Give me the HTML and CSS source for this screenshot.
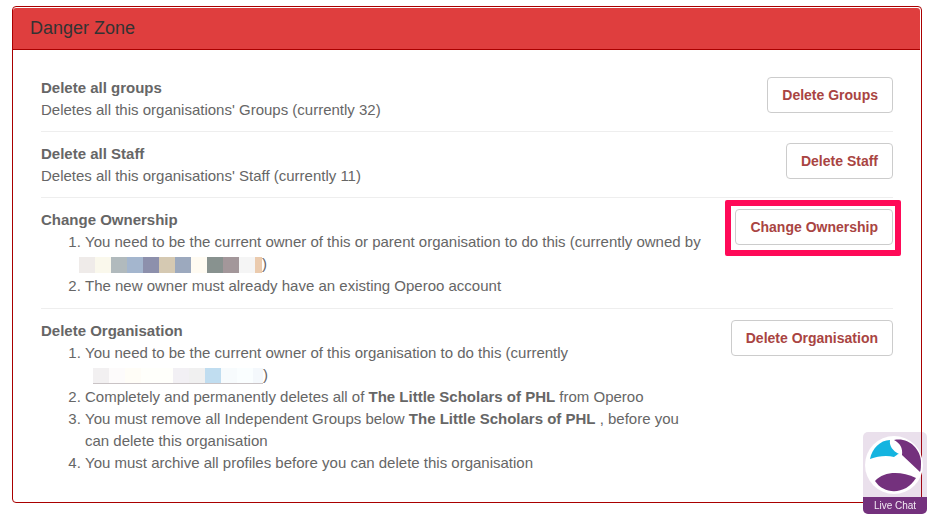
FILE: index.html
```html
<!DOCTYPE html>
<html lang="en">
<head>
    <meta charset="UTF-8">
    <meta name="viewport" content="width=device-width, initial-scale=1.0">
    <title>Danger Zone</title>
    <link rel="stylesheet" href="styles.css">
</head>
<body>
    <section class="panel">
        <h1 class="panel-heading">Danger Zone</h1>
        <div class="panel-body">
            <div class="setting">
                <div class="setting-text">
                    <h2>Delete all groups</h2>
                    <p>Deletes all this organisations' Groups (currently 32)</p>
                </div>
                <button type="button" class="btn">Delete Groups</button>
            </div>
            <div class="setting">
                <div class="setting-text">
                    <h2>Delete all Staff</h2>
                    <p>Deletes all this organisations' Staff (currently 11)</p>
                </div>
                <button type="button" class="btn">Delete Staff</button>
            </div>
            <div class="setting">
                <div class="setting-text">
                    <h2>Change Ownership</h2>
                    <ol>
                        <li>You need to be the current owner of this or parent organisation to do this (currently owned by <span class="owner"><span class="masked masked-owner"></span>)</span></li>
                        <li>The new owner must already have an existing Operoo account</li>
                    </ol>
                </div>
                <button type="button" class="btn highlighted">Change Ownership</button>
            </div>
            <div class="setting">
                <div class="setting-text">
                    <h2>Delete Organisation</h2>
                    <ol>
                        <li>You need to be the current owner of this organisation to do this (currently <span class="owner"><span class="masked masked-parent"></span>)</span></li>
                        <li>Completely and permanently deletes all of <b>The Little Scholars of PHL</b> from Operoo</li>
                        <li>You must remove all Independent Groups below <b>The Little Scholars of PHL</b> , before you can delete this organisation</li>
                        <li>You must archive all profiles before you can delete this organisation</li>
                    </ol>
                </div>
                <button type="button" class="btn">Delete Organisation</button>
            </div>
        </div>
    </section>

    <button type="button" class="live-chat">
        <svg viewBox="0 0 64 65" aria-hidden="true">
            <circle cx="31" cy="33" r="29" fill="#fff"/>
            <path d="M7 27C9 17 17 8 27 8C26 14 30 19 36 22C34 22 33 24 31 25C24 23 15 24 7 27Z" fill="#14b4e0"/>
            <path d="M31 8C45 5 57 16 58 29C58 34 58 38 57 40L39 23C40 16 37 11 31 8Z" fill="#74317d"/>
            <path d="M12 49C21 39 38 39 53 46C43 63 21 63 12 49Z" fill="#74317d"/>
        </svg>
        <span>Live Chat</span>
    </button>
</body>
</html>
```

FILE: styles.css
```css
* {
    box-sizing: border-box;
}
body {
    margin: 6px 8px 15px 12px;
    background: #fff;
    color: #666;
    font-family: "Liberation Sans", Arial, sans-serif;
    font-size: 15px;
    line-height: 22px;
}
.panel {
    border: 1px solid #a90000;
    border-radius: 4px;
    padding: 1px 1px 0 0;
}
.panel-heading {
    margin: 0;
    padding: 9px 17px 10px;
    background: #df3e3e;
    border-bottom: 1px solid #a90000;
    border-radius: 3px 3px 0 0;
    color: #333;
    font-size: 18px;
    font-weight: normal;
    line-height: 22px;
}
.panel-body {
    padding: 16px 27px 17px 28px;
}
.setting {
    display: flex;
    justify-content: space-between;
    align-items: flex-start;
    gap: 8px;
    padding: 11px 0 10px;
    border-bottom: 1px solid #eee;
}
.setting:last-child {
    border-bottom: none;
}
.setting-text {
    max-width: 78%;
}
.setting h2 {
    margin: 0;
    font-size: 15px;
    line-height: 22px;
}
.setting p {
    margin: 0;
}
.setting ol {
    margin: 0 0 1px;
    padding-left: 44px;
}
.owner {
    white-space: nowrap;
}
.masked {
    display: inline-block;
    height: 16px;
    vertical-align: middle;
}
.masked-owner {
    width: 183px;
    margin-left: -6px;
    background: linear-gradient(90deg,
        #efebe9 16px, #faf8ec 16px 32px, #b1babd 32px 48px, #a4b6ce 48px 64px,
        #8d90ac 64px 80px, #d5c9b2 80px 96px, #9ca9be 96px 112px, #fffbf2 112px 128px,
        #88928f 128px 144px, #a3979a 144px 160px, #f5f5f5 160px 176px, #ebcbae 176px);
}
.masked-parent {
    width: 170px;
    margin-left: 8px;
    border-bottom: 1px solid #c9c3c5;
    background: linear-gradient(90deg,
        #f2f0f1 16px, #fdfbfb 16px 32px, #fffdf7 32px 48px, #fffffb 48px 80px,
        #f2f0f4 80px 96px, #f0f0f0 96px 112px, #c0ddf0 112px 128px,
        #f7fbfd 128px 144px, #fafeff 144px 160px, #f4f8fc 160px);
}
.btn {
    position: relative;
    flex: none;
    height: 36px;
    padding: 0 14px;
    background: #fff;
    border: 1px solid #ccc;
    border-radius: 4px;
    color: #a94442;
    font-family: inherit;
    font-size: 14px;
    font-weight: bold;
    line-height: 22px;
    cursor: pointer;
}
.highlighted::after {
    content: "";
    position: absolute;
    inset: -10px -9px -12px -11px;
    border: 6px solid #ff0a58;
    border-radius: 2px;
}
/* floats over the bottom right corner of the page */
.live-chat {
    position: fixed;
    right: 3px;
    bottom: 4px;
    width: 64px;
    padding: 0;
    overflow: hidden;
    background: rgba(116, 49, 125, 0.15);
    border: none;
    border-radius: 5px;
    color: #f3eaf4;
    font-family: inherit;
    font-size: 10px;
    line-height: 17px;
    cursor: pointer;
}
.live-chat svg {
    display: block;
    width: 100%;
}
.live-chat span {
    display: block;
    background: #74317d;
}
```
